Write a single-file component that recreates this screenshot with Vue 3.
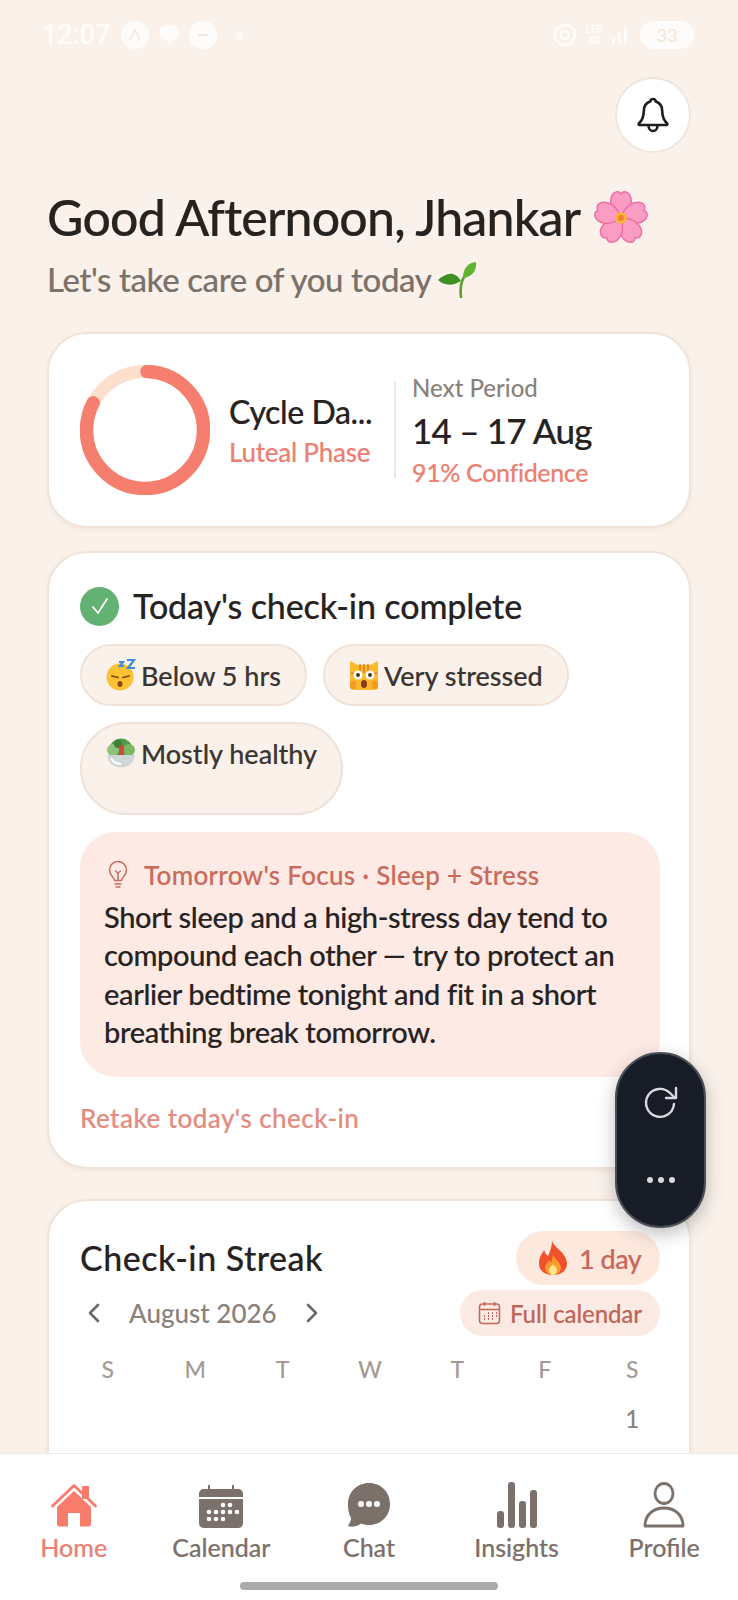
<script setup>
const weekdays = ['S', 'M', 'T', 'W', 'T', 'F', 'S']
const weeks = [['', '', '', '', '', '', '1']]

// ring values
const radius = 58.5
const circumference = 2 * Math.PI * radius
const progress = 0.82
</script>

<template>
  <div class="page">
    <div class="status">
      <div class="status-left">
        <span class="time">12:07</span>
        <span class="dot-app">
          <svg width="14" height="14" viewBox="0 0 14 14" fill="none" stroke="#f3e6dc" stroke-width="1.6"><path d="M2 12 7 2l5 10" /></svg>
        </span>
        <svg width="24" height="26" viewBox="0 0 24 26" fill="#fff"><path d="M12 3c6 0 10 3 10 8s-4 7-7 8l-3 5-1-5c-4 0-9-3-9-8s4-8 10-8z" /></svg>
        <span class="dot-msg"><i></i></span>
        <span class="dot-small"></span>
      </div>
      <div class="status-right">
        <svg width="26" height="26" viewBox="0 0 26 26" fill="none" stroke="#fff" stroke-width="2.4"><circle cx="13" cy="13" r="10" /><circle cx="13" cy="13" r="4" /></svg>
        <span class="lte">LTE<br />4G</span>
        <svg width="22" height="22" viewBox="0 0 22 22" fill="#fff"><rect x="2" y="14" width="3" height="6" /><rect x="8" y="9" width="3" height="11" /><rect x="14" y="3" width="3" height="17" /></svg>
        <span class="battery">33</span>
      </div>
    </div>

    <main class="content">
      <div class="top-row">
        <button class="bell">
          <svg width="36" height="38" viewBox="0 0 36 38" fill="none" stroke="#1f1c1a" stroke-width="2.6" stroke-linejoin="round" stroke-linecap="round">
            <path d="M18 3c-1.6 0-2.6 1-2.8 2.6C10.800 7 8.800 10.500 8.800 15c0 6-1.800 9.500-5 12.500-.5.6-.1 1.500.7 1.500h27c.8 0 1.200-.9.7-1.500-3.200-3-5-6.500-5-12.500 0-4.500-2-8-6.400-9.400C20.600 4 19.600 3 18 3z" />
            <path d="M13.500 29.500c0 3.200 2 5.500 4.500 5.500s4.500-2.300 4.500-5.500" />
          </svg>
        </button>
      </div>

      <h1 class="greeting">
        Good Afternoon, Jhankar
        <svg class="flower" width="58" height="58" viewBox="0 0 60 60">
          <g stroke="#ec6fa3" stroke-width="1.5" fill="#fb9cc4">
            <path v-for="a in [0, 72, 144, 216, 288]" :key="a" :transform="`rotate(${a} 30 31)`"
              d="M30 31C20 24 17 14 21 7c3-4 7-4 9-1 2-3 6-3 9 1 4 7 1 17-9 24z" />
          </g>
          <circle cx="30" cy="31" r="6" fill="#f7b733" />
          <circle cx="30" cy="31" r="3" fill="#ef7f3a" />
        </svg>
      </h1>
      <p class="subtitle">
        Let's take care of you today
        <svg class="sprout" width="40" height="38" viewBox="0 0 40 38">
          <path d="M24 37c-1-8 0-15 3-20" fill="none" stroke="#5aa02c" stroke-width="2.600" stroke-linecap="round" />
          <path d="M26 18C26 8 31 3 39 2c1 9-4 15-13 16z" fill="#5fb52f" />
          <path d="M24 21C18 11 10 12 1 20c6 6 15 6 23 1z" fill="#3f8f24" />
        </svg>
      </p>

      <section class="card cycle-card">
        <svg class="ring" width="130" height="130" viewBox="0 0 130 130">
          <circle cx="65" cy="65" :r="radius" fill="none" stroke="#fcdfcd" stroke-width="13" />
          <circle cx="65" cy="65" :r="radius" fill="none" stroke="#f57e6e" stroke-width="13.500" stroke-linecap="round"
            :stroke-dasharray="`${circumference * progress} ${circumference}`" transform="rotate(-88 65 65)" />
        </svg>
        <div class="cycle-text">
          <div class="cycle-day">Cycle Da...</div>
          <div class="cycle-phase">Luteal Phase</div>
        </div>
        <div class="next">
          <div class="next-label">Next Period</div>
          <div class="next-date">14 – 17 Aug</div>
          <div class="next-conf">91% Confidence</div>
        </div>
      </section>

      <section class="card checkin-card">
        <div class="checkin-head">
          <span class="check">
            <svg width="22" height="22" viewBox="0 0 22 22" fill="none" stroke="#fff" stroke-width="1.800" stroke-linecap="round" stroke-linejoin="round"><path d="M4 12l5 6L18 4" /></svg>
          </span>
          <h2 class="card-title">Today's check-in complete</h2>
        </div>
        <div class="chips">
          <span class="chip">
            <svg width="30" height="32" viewBox="0 0 30 32">
              <circle cx="14" cy="18" r="13.500" fill="#fdc234" />
              <path d="M6 17l6 1.500M17 18.500l6-1.500" stroke="#7a4a12" stroke-width="1.800" stroke-linecap="round" />
              <ellipse cx="14" cy="25" rx="2.500" ry="3" fill="#8a4a1c" />
              <path d="M13 3h4l-3 4h4M21 1h7l-6 8h7" fill="none" stroke="#3d8fdc" stroke-width="2.200" />
            </svg>
            Below 5 hrs
          </span>
          <span class="chip">
            <svg width="30" height="32" viewBox="0 0 30 32">
              <path d="M1 2l8 4h12l8-4v25c0 3-2 4-5 4H6c-3 0-5-1-5-4z" fill="#fbb829" />
              <path d="M11 6v6M15 6v7M19 6v6M3 14l4 2M27 14l-4 2" stroke="#e8872a" stroke-width="2" stroke-linecap="round" />
              <circle cx="9" cy="16" r="4.500" fill="#fff" /><circle cx="21" cy="16" r="4.500" fill="#fff" />
              <circle cx="9" cy="16" r="2" fill="#4a3520" /><circle cx="21" cy="16" r="2" fill="#4a3520" />
              <ellipse cx="15" cy="25" rx="3" ry="4" fill="#8a3a1c" />
              <rect x="1" y="22" width="6" height="8" rx="2" fill="#f59a23" /><rect x="23" y="22" width="6" height="8" rx="2" fill="#f59a23" />
            </svg>
            Very stressed
          </span>
          <span class="chip chip-tall">
            <svg width="30" height="30" viewBox="0 0 30 30">
              <circle cx="15" cy="12" r="11.500" fill="#4f9a4a" />
              <circle cx="7" cy="12" r="6" fill="#8cc47a" />
              <circle cx="23" cy="12" r="6" fill="#7ab865" />
              <circle cx="12" cy="6" r="4" fill="#3f7f3a" />
              <rect x="13" y="7" width="5" height="12" rx="2.500" fill="#d0473c" />
              <path d="M1.500 17h27c0 8-6 12.500-13.500 12.500S1.500 25 1.500 17z" fill="#cfd6d8" />
              <path d="M5 20c2 4 6 6 10 6" fill="none" stroke="#fff" stroke-width="2" />
            </svg>
            Mostly healthy
          </span>
        </div>

        <div class="focus">
          <div class="focus-head">
            <svg width="20" height="28" viewBox="0 0 20 28" fill="none" stroke="#c96a5b" stroke-width="1.500" stroke-linecap="round" stroke-linejoin="round">
              <path d="M6.500 19.500c0-3-5-5-5-10.500a8.500 8.500 0 0 1 17 0c0 5.500-5 7.500-5 10.500z" />
              <path d="M7 23h6M8 26h4M10 19v-7l-2.500-2M10 12l2.500-2" />
            </svg>
            <span>Tomorrow's Focus · Sleep + Stress</span>
          </div>
          <p class="focus-body">Short sleep and a high-stress day tend to compound each other — try to protect an earlier bedtime tonight and fit in a short breathing break tomorrow.</p>
        </div>
        <div class="retake">Retake today's check-in</div>
      </section>

      <section class="card streak-card">
        <div class="streak-row">
          <h2 class="card-title streak-title">Check-in Streak</h2>
          <span class="streak-pill">
            <svg width="32" height="36" viewBox="0 0 32 36">
              <path d="M15 1c2 7 14 11 15 22 0 8-6 12-14 12S2 31 2 23c0-6 3-9 5-13 1 3 2 5 4 6 2-5 4-9 4-15z" fill="#f0502a" />
              <path d="M16 14c1 5 8 8 8 14 0 4-4 7-8 7s-8-3-8-7c0-4 3-5 4-8 1 1 2 2 2 3 1-3 2-6 2-9z" fill="#fb9a2c" />
              <path d="M16 24c1 2 4 3 4 6 0 3-2 5-4 5s-4-2-4-5c0-3 3-4 4-6z" fill="#fee38a" />
            </svg>
            1 day
          </span>
        </div>
        <div class="month-row">
          <div class="month-nav">
            <svg width="16" height="22" viewBox="0 0 16 22" fill="none" stroke="#6f6864" stroke-width="2.600" stroke-linecap="round" stroke-linejoin="round"><path d="M12 3 4 11l8 8" /></svg>
            <span class="month">August 2026</span>
            <svg width="16" height="22" viewBox="0 0 16 22" fill="none" stroke="#6f6864" stroke-width="2.600" stroke-linecap="round" stroke-linejoin="round"><path d="m4 3 8 8-8 8" /></svg>
          </div>
          <span class="full-cal">
            <svg width="23" height="24" viewBox="0 0 23 24" fill="none" stroke="#c0685c" stroke-width="1.500">
              <rect x="1.500" y="3" width="20" height="19.500" rx="3" />
              <path d="M1.500 8.500h20M6.500 1v4M16.500 1v4" />
              <path d="M10 12h1M14 12h1M18 12h1M6 15h1M10 15h1M14 15h1M18 15h1M6 18h1M10 18h1M14 18h1" stroke-width="1.800" />
            </svg>
            Full calendar
          </span>
        </div>
        <div class="week-grid week-head">
          <span v-for="(d, i) in weekdays" :key="i">{{ d }}</span>
        </div>
        <div v-for="(week, w) in weeks" :key="w" class="week-grid week-days">
          <span v-for="(d, i) in week" :key="i">{{ d }}</span>
        </div>
      </section>
    </main>

    <nav class="nav">
      <div class="nav-item active">
        <svg width="46" height="46" viewBox="0 0 46 46">
          <path d="M31 4h7v13h-7z" fill="#f87c6c" />
          <path d="M1.500 24 23 3.500 44.500 24" fill="none" stroke="#f87c6c" stroke-width="2.800" stroke-linecap="round" stroke-linejoin="round" />
          <path d="M23 9 40 25v17c0 1.500-1 2.500-2.500 2.500H29V31H17v13.500H8.500C7 44.500 6 43.500 6 42V25z" fill="#f87c6c" />
        </svg>
        <span>Home</span>
      </div>
      <div class="nav-item">
        <svg width="46" height="46" viewBox="0 0 46 46">
          <path d="M1 12c0-3 2-5 5-5h4V3h2v4h22V3h2v4h4c3 0 5 2 5 5v3H1z" fill="#7b706a" />
          <path d="M1 17h44v24c0 3-2 5-5 5H6c-3 0-5-2-5-5z" fill="#7b706a" />
          <g fill="#fff">
            <circle cx="25" cy="23" r="2.300" /><circle cx="32" cy="23" r="2.300" />
            <circle cx="11" cy="30" r="2.300" /><circle cx="18" cy="30" r="2.300" /><circle cx="25" cy="30" r="2.300" /><circle cx="32" cy="30" r="2.300" /><circle cx="39" cy="30" r="2.300" />
            <circle cx="11" cy="37" r="2.300" /><circle cx="18" cy="37" r="2.300" /><circle cx="25" cy="37" r="2.300" />
          </g>
        </svg>
        <span>Calendar</span>
      </div>
      <div class="nav-item">
        <svg width="46" height="46" viewBox="0 0 46 46">
          <path d="M23 1C35 1 44 10 44 22S35 43 23 43c-3 0-6-.6-8-1.500C12 44 7 45 3.500 44.500c-1 0-1.500-1-1-1.800 1.500-2 2.500-4.200 2.500-7C2.500 32 2 27 2 22 2 10 11 1 23 1z" fill="#7b706a" />
          <g fill="#fff"><circle cx="15" cy="22" r="3" /><circle cx="23" cy="22" r="3" /><circle cx="31" cy="22" r="3" /></g>
        </svg>
        <span>Chat</span>
      </div>
      <div class="nav-item">
        <svg width="46" height="46" viewBox="0 0 46 46" fill="#7b706a">
          <rect x="3" y="29" width="7" height="17" rx="3" />
          <rect x="14" y="0" width="7" height="46" rx="3" />
          <rect x="25" y="19" width="7" height="27" rx="3" />
          <rect x="36" y="8" width="7" height="38" rx="3" />
        </svg>
        <span>Insights</span>
      </div>
      <div class="nav-item">
        <svg width="46" height="46" viewBox="0 0 46 46" fill="none" stroke="#7b706a" stroke-width="2.800">
          <ellipse cx="23" cy="11.500" rx="9" ry="10" />
          <path d="M4 44c0-11 8-18 19-18s19 7 19 18z" stroke-linejoin="round" />
        </svg>
        <span>Profile</span>
      </div>
      <div class="home-bar"></div>
    </nav>

    <div class="fab">
      <svg width="36" height="36" viewBox="0 0 36 36" fill="none" stroke="#d8dadc" stroke-width="2.400" stroke-linecap="round" stroke-linejoin="round">
        <path d="M31 20a14 14 0 1 1-4-11l5 5" />
        <path d="M33 4v10H23" />
      </svg>
      <svg width="30" height="8" viewBox="0 0 30 8" fill="#d8dadc">
        <circle cx="4" cy="4" r="3" /><circle cx="15" cy="4" r="3" /><circle cx="26" cy="4" r="3" />
      </svg>
    </div>
  </div>
</template>

<style>
html,
body {
  margin: 0;
  background: #faf2ea;
}
</style>

<style scoped>
.page {
  position: relative;
  width: 738px;
  height: 1600px;
  overflow: hidden;
  display: flex;
  flex-direction: column;
  background: #faf2ea;
  color: #26221f;
  font-family: "Lato", "Noto Sans", sans-serif;
  font-weight: 500;
  -webkit-text-stroke: 0.15px currentColor;
}

.status {
  flex: none;
  height: 68px;
  padding: 2px 44px 0 42px;
  box-sizing: border-box;
  display: flex;
  align-items: center;
  justify-content: space-between;
  color: #fff;
  opacity: 0.8;
}

.status-left,
.status-right {
  display: flex;
  align-items: center;
  gap: 8px;
}

.time {
  font-size: 27px;
  font-family: "Roboto", sans-serif;
  margin-right: 2px;
}

.dot-app {
  width: 28px;
  height: 28px;
  border-radius: 50%;
  background: #fff;
  display: flex;
  align-items: center;
  justify-content: center;
}

.dot-msg {
  width: 28px;
  height: 28px;
  border-radius: 50%;
  background: #fff;
  display: flex;
  align-items: center;
  justify-content: center;
}

.dot-msg i {
  width: 10px;
  height: 2px;
  background: #f3e6dc;
}

.dot-small {
  width: 9px;
  height: 9px;
  margin-left: 10px;
  border-radius: 50%;
  background: #fff;
  opacity: 0.7;
}

.lte {
  font-size: 10px;
  line-height: 11px;
  font-weight: 700;
  text-align: center;
  font-family: "Roboto", sans-serif;
}

.battery {
  width: 54px;
  height: 28px;
  border-radius: 14px;
  background: #fff;
  color: #f3e6dc;
  font-size: 18px;
  line-height: 28px;
  text-align: center;
}

.content {
  flex: 1;
  min-height: 0;
  overflow: hidden;
  padding: 9px 47px 0;
}

.top-row {
  display: flex;
  justify-content: flex-end;
}

.bell {
  width: 76px;
  height: 76px;
  padding: 0;
  box-sizing: border-box;
  border: 2px solid #f0e6dd;
  border-radius: 50%;
  background: #fff;
  display: flex;
  align-items: center;
  justify-content: center;
}

.greeting {
  margin: 34px 0 0;
  font-size: 50px;
  line-height: 60px;
  font-weight: 500;
  letter-spacing: -0.8px;
  color: #26221f;
  white-space: nowrap;
  display: flex;
  align-items: center;
  gap: 12px;
}

.subtitle {
  margin: 12px 0 0;
  font-size: 33px;
  line-height: 40px;
  letter-spacing: -0.4px;
  color: #7a716b;
  white-space: nowrap;
  display: flex;
  align-items: center;
  gap: 6px;
}

.card {
  box-sizing: border-box;
  background: #fff;
  border: 2px solid #f0e4da;
  border-radius: 40px;
  box-shadow: 0 2px 5px rgba(120, 90, 70, 0.08);
}

.cycle-card {
  height: 196px;
  margin-top: 33px;
  padding: 0 31px;
  display: flex;
  align-items: center;
}

.ring {
  flex: none;
}

.cycle-text {
  width: 165px;
  margin-left: 19px;
  padding-top: 2px;
  flex: none;
}

.cycle-day {
  font-size: 32px;
  line-height: 42px;
  letter-spacing: -0.4px;
  color: #26221f;
}

.cycle-phase {
  font-size: 26px;
  line-height: 38px;
  letter-spacing: -0.25px;
  color: #ec8072;
}

.next {
  height: 96px;
  padding-left: 16px;
  border-left: 2px solid #eee6e0;
  display: flex;
  flex-direction: column;
  justify-content: center;
}

.next-label {
  font-size: 24px;
  line-height: 34px;
  color: #8a817b;
  -webkit-text-stroke: 0;
}

.next-date {
  font-size: 35px;
  line-height: 50px;
  letter-spacing: -0.75px;
  color: #26221f;
}

.next-conf {
  font-size: 25px;
  line-height: 34px;
  letter-spacing: -0.35px;
  color: #ec8072;
}

.checkin-card {
  margin-top: 23px;
  padding: 33px 29px 30px 31px;
  height: 618px;
}

.checkin-head {
  display: flex;
  align-items: center;
  gap: 14px;
  height: 40px;
}

.check {
  width: 39px;
  height: 39px;
  border-radius: 50%;
  background: #63b274;
  display: flex;
  align-items: center;
  justify-content: center;
}

.card-title {
  margin: 0;
  font-size: 34px;
  line-height: 44px;
  font-weight: 500;
  letter-spacing: -0.13px;
  color: #26221f;
}

.streak-title {
  letter-spacing: 0.5px;
}

.chips {
  margin-top: 18px;
  display: flex;
  flex-wrap: wrap;
  gap: 16px;
}

.chip {
  box-sizing: border-box;
  height: 62px;
  padding: 0 24px;
  border: 2px solid #f0e2d8;
  border-radius: 31px;
  background: #faf2ea;
  font-size: 27px;
  display: flex;
  align-items: center;
  gap: 5px;
  color: #3b3532;
  white-space: nowrap;
}

.chip-tall {
  height: 93px;
  border-radius: 46px;
  padding-bottom: 31px;
}

.focus {
  box-sizing: border-box;
  height: 245px;
  margin-top: 17px;
  padding: 26px 24px 0;
  border-radius: 36px;
  background: #fdeae5;
}

.focus-head {
  display: flex;
  align-items: center;
  gap: 16px;
  padding-left: 4px;
  height: 34px;
  font-size: 26px;
  letter-spacing: 0.3px;
  color: #c96a5b;
}

.focus-body {
  margin: 6px 0 0;
  font-size: 29px;
  line-height: 38.3px;
  letter-spacing: -0.35px;
  color: #26221f;
}

.retake {
  margin-top: 24px;
  font-size: 26px;
  line-height: 34px;
  letter-spacing: 0.45px;
  color: #e58a7e;
}

.streak-card {
  margin-top: 30px;
  padding: 30px 29px 0 31px;
  height: 400px;
}

.streak-row {
  display: flex;
  align-items: center;
  justify-content: space-between;
}

.streak-pill {
  height: 54px;
  width: 144px;
  box-sizing: border-box;
  padding-left: 21px;
  border-radius: 27px;
  background: #fce8dd;
  display: flex;
  align-items: center;
  gap: 10px;
  font-size: 27px;
  letter-spacing: -0.5px;
  color: #c8675a;
}

.month-row {
  margin-top: 5px;
  display: flex;
  align-items: center;
  justify-content: space-between;
}

.month-nav {
  display: flex;
  align-items: center;
  gap: 27px;
  padding-left: 6px;
}

.month {
  font-size: 26px;
  color: #8a817b;
  -webkit-text-stroke: 0;
}

.full-cal {
  box-sizing: border-box;
  height: 46px;
  width: 200px;
  padding-left: 18px;
  border-radius: 23px;
  background: #fbe9e3;
  display: flex;
  align-items: center;
  gap: 9px;
  font-size: 24px;
  letter-spacing: -0.1px;
  color: #bd6659;
}

.week-grid {
  margin: 0 -16px;
  display: grid;
  grid-template-columns: repeat(7, 1fr);
  text-align: center;
  line-height: 30px;
  -webkit-text-stroke: 0;
}

.week-head {
  margin-top: 18px;
  font-size: 23px;
  color: #a39a95;
}

.week-days {
  margin-top: 20px;
  font-size: 24px;
  color: #8a817b;
}

.nav {
  flex: none;
  box-sizing: border-box;
  height: 147px;
  padding-top: 28px;
  border-top: 1px solid #eeeae6;
  background: #fff;
  position: relative;
  z-index: 1;
  display: grid;
  grid-template-columns: repeat(5, 1fr);
  grid-template-rows: auto auto;
  justify-items: center;
  align-content: start;
}

.nav-item {
  display: flex;
  flex-direction: column;
  align-items: center;
  gap: 4px;
  font-size: 25px;
  line-height: 30px;
  color: #7b706a;
}

.nav-item.active {
  color: #ec8072;
}

.home-bar {
  grid-column: 1 / -1;
  width: 258px;
  height: 8px;
  margin-top: 20px;
  border-radius: 4px;
  background: #ababab;
}

.fab {
  position: absolute;
  z-index: 2;
  left: 615px;
  top: 1052px;
  width: 91px;
  height: 176px;
  box-sizing: border-box;
  border: 2px solid #4a4f57;
  border-radius: 46px;
  background: #171c26;
  box-shadow: 0 6px 18px rgba(40, 40, 50, 0.3);
  display: flex;
  flex-direction: column;
  align-items: center;
  gap: 56px;
  padding-top: 30px;
}
</style>
